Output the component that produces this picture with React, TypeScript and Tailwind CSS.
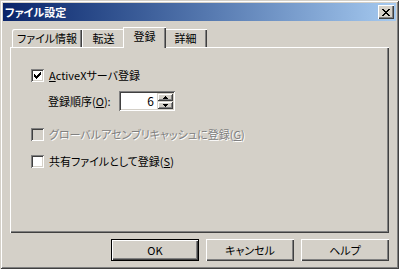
import React from "react";

function Check() {
  const px: [number, number][] = [
    [6, 0], [5, 1], [6, 1], [0, 2], [4, 2], [5, 2], [6, 2], [0, 3], [1, 3], [3, 3], [4, 3], [5, 3],
    [0, 4], [1, 4], [2, 4], [3, 4], [4, 4], [1, 5], [2, 5], [3, 5], [2, 6],
  ];
  return (
    <svg width="7" height="7" viewBox="0 0 7 7" shapeRendering="crispEdges">
      {px.map(([x, y], i) => (
        <rect key={i} x={x} y={y} width="1" height="1" fill="#000" />
      ))}
    </svg>
  );
}

function Checkbox({ checked, disabled }: { checked?: boolean; disabled?: boolean }) {
  return (
    <div
      className={
        disabled
          ? "w-[13px] h-[13px] shrink-0 bg-[#d4d0c8] shadow-[inset_1px_1px_#808080,inset_-1px_-1px_#fff,inset_2px_2px_#404040,inset_-2px_-2px_#d4d0c8] flex items-center justify-center"
          : "w-[13px] h-[13px] shrink-0 bg-white shadow-[inset_1px_1px_#808080,inset_-1px_-1px_#fff,inset_2px_2px_#404040,inset_-2px_-2px_#d4d0c8] flex items-center justify-center"
      }
    >
      {checked && <Check />}
    </div>
  );
}

function SpinBtn({ up }: { up?: boolean }) {
  return (
    <div className="flex-1 bg-[#d4d0c8] shadow-[inset_1px_1px_#d4d0c8,inset_-1px_-1px_#404040,inset_2px_2px_#fff,inset_-2px_-2px_#808080] flex items-center justify-center">
      <svg width="5" height="3" viewBox="0 0 5 3" shapeRendering="crispEdges">
        {up ? (
          <>
            <rect x="2" y="0" width="1" height="1" fill="#000" />
            <rect x="1" y="1" width="3" height="1" fill="#000" />
            <rect x="0" y="2" width="5" height="1" fill="#000" />
          </>
        ) : (
          <>
            <rect x="0" y="0" width="5" height="1" fill="#000" />
            <rect x="1" y="1" width="3" height="1" fill="#000" />
            <rect x="2" y="2" width="1" height="1" fill="#000" />
          </>
        )}
      </svg>
    </div>
  );
}

function Button({ children, isDefault }: { children: React.ReactNode; isDefault?: boolean }) {
  return (
    <div
      className={
        isDefault
          ? "w-[88px] h-[22px] flex items-center justify-center bg-[#d4d0c8] shadow-[inset_0_0_0_1px_#000,inset_2px_2px_#fff,inset_-2px_-2px_#404040,inset_-3px_-3px_#808080]"
          : "w-[88px] h-[22px] flex items-center justify-center bg-[#d4d0c8] shadow-[inset_1px_1px_#fff,inset_-1px_-1px_#404040,inset_-2px_-2px_#808080]"
      }
    >
      {children}
    </div>
  );
}

export default function App() {
  return (
    <div className="w-[399px] h-[269px] bg-[#d4d0c8] p-[3px] flex flex-col text-[11px] leading-none text-black [font-family:'Noto_Sans_CJK_JP',sans-serif] [font-feature-settings:'palt'] shadow-[inset_1px_1px_#d4d0c8,inset_-1px_-1px_#404040,inset_2px_2px_#fff,inset_-2px_-2px_#808080]">
      {/* Title bar */}
      <div className="h-[18px] flex items-center bg-gradient-to-r from-[#0a246a] to-[#a6caf0] pl-[2px] pr-[2px]">
        <span className="text-white font-bold text-[11px]">ファイル設定</span>
        <div className="ml-auto w-[16px] h-[14px] bg-[#d4d0c8] shadow-[inset_1px_1px_#fff,inset_-1px_-1px_#404040,inset_-2px_-2px_#808080] flex items-center justify-center">
          <svg width="8" height="7" viewBox="0 0 8 7" shapeRendering="crispEdges">
            <path d="M0 0h2v1h1v1h2V1h1V0h2v1h-1v1h-1v1h-1v1h1v1h1v1h1v1h-2V6h-1V5H3v1H2v1H0V6h1V5h1V4h1V3H2V2H1V1H0z" fill="#000" />
          </svg>
        </div>
      </div>

      {/* Body */}
      <div className="flex flex-col px-[7px] pt-[6px]">
        {/* Tabs */}
        <div className="flex items-end h-[20px] pl-[2px]">
          <div className="w-[70px] h-[18px] flex items-center justify-center shadow-[inset_1px_1px_#fff,inset_-1px_0_#404040,inset_-2px_0_#808080] rounded-tl-[2px]">
            ファイル情報
          </div>
          <div className="w-[43px] h-[18px] flex items-center justify-center shadow-[inset_1px_1px_#fff,inset_-1px_0_#404040,inset_-2px_0_#808080]">
            転送
          </div>
          <div className="relative z-10 w-[43px] h-[21px] -mx-[2px] mb-[-1px] pb-[2px] bg-[#d4d0c8] flex items-center justify-center shadow-[inset_1px_1px_#fff,inset_-1px_0_#404040,inset_-2px_0_#808080]">
            登録
          </div>
          <div className="w-[43px] h-[18px] flex items-center justify-center shadow-[inset_1px_1px_#fff,inset_-1px_0_#404040,inset_-2px_0_#808080]">
            詳細
          </div>
        </div>

        {/* Panel */}
        <div className="h-[186px] flex flex-col pl-[21px] shadow-[inset_1px_1px_#fff,inset_-1px_-1px_#404040,inset_-2px_-2px_#808080]">
          <div className="mt-[22px] flex items-center gap-[5px] h-[13px]">
            <Checkbox checked />
            <span>
              <span className="underline">A</span>ctiveXサーバ登録
            </span>
          </div>
          <div className="mt-[9px] ml-[17px] flex items-center h-[20px]">
            <span className="w-[71px]">
              登録順序(<span className="underline">O</span>):
            </span>
            <div className="w-[56px] h-[20px] bg-white p-[2px] flex shadow-[inset_1px_1px_#808080,inset_-1px_-1px_#fff,inset_2px_2px_#404040,inset_-2px_-2px_#d4d0c8]">
              <div className="flex-1 flex items-center justify-end pr-[3px] text-[12px]">6</div>
              <div className="w-[16px] flex flex-col">
                <SpinBtn up />
                <SpinBtn />
              </div>
            </div>
          </div>
          <div className="mt-[17px] flex items-center gap-[5px] h-[13px]">
            <Checkbox disabled />
            <span className="text-[#808080] [text-shadow:1px_1px_0_#fff]">
              グローバルアセンブリキャッシュに登録(<span className="underline">G</span>)
            </span>
          </div>
          <div className="mt-[14px] flex items-center gap-[5px] h-[13px]">
            <Checkbox />
            <span>
              共有ファイルとして登録(<span className="underline">S</span>)
            </span>
          </div>
        </div>

        {/* Buttons */}
        <div className="mt-[6px] flex justify-end gap-[7px]">
          <Button isDefault>OK</Button>
          <Button>キャンセル</Button>
          <Button>ヘルプ</Button>
        </div>
      </div>
    </div>
  );
}
